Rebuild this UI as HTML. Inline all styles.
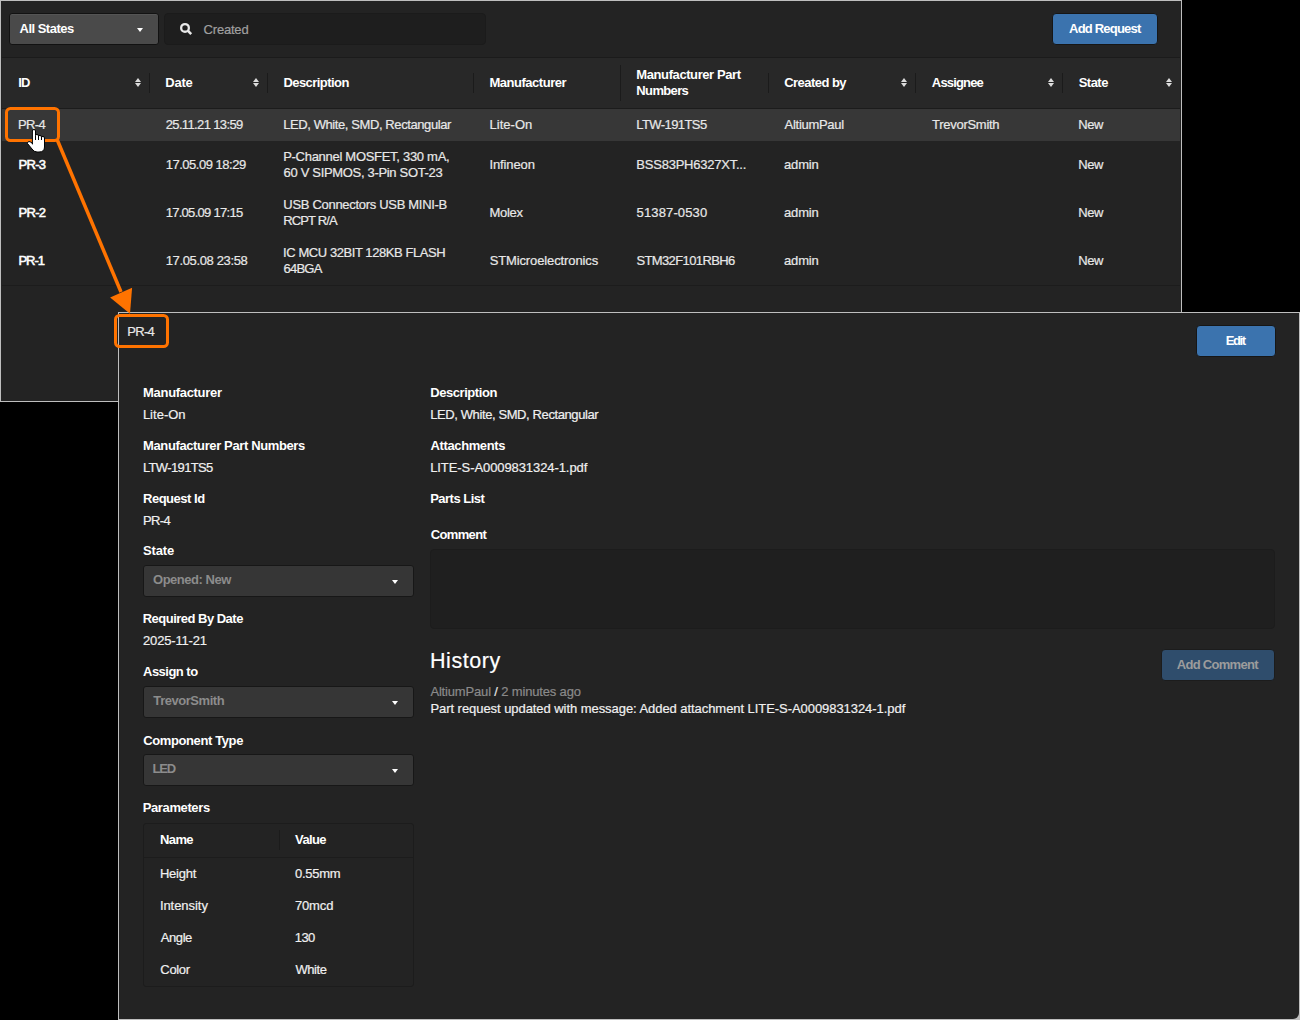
<!DOCTYPE html>
<html><head><meta charset="utf-8">
<style>
*{box-sizing:border-box}
html,body{margin:0;padding:0}
body{width:1300px;height:1020px;background:#000;position:relative;overflow:hidden;font-family:"Liberation Sans",sans-serif}
.a{position:absolute}
.t{position:absolute;white-space:nowrap;line-height:1;font-family:"Liberation Sans",sans-serif}
.r{-webkit-text-stroke:0.2px currentColor}
.sb{-webkit-text-stroke:0.55px currentColor}
.btn{position:absolute;background:#3b73ae;border:1px solid #161616;border-radius:4px}
.sel{position:absolute;background:#363636;border:1px solid #171717;border-radius:3px}
.div{position:absolute;width:1px;background:#1b1b1b}
</style></head><body>
<!-- top panel -->
<div class="a" style="left:0;top:0;width:1182px;height:402px;background:#bebebe"></div>
<div class="a" style="left:1px;top:1px;width:1180px;height:400px;background:#232323"></div>
<!-- toolbar -->
<div class="a" style="left:9px;top:13px;width:150px;height:32px;background:#4a4a4a;border:1px solid #121212;border-radius:3px;box-shadow:inset 0 1px 0 #545454"></div>
<svg class="a" style="left:0;top:0" width="1300" height="60">
 <polygon points="137,28 143,28 140,32" fill="#ffffff"/>
</svg>
<div class="a" style="left:164px;top:13px;width:322px;height:32px;background:#1e1e1e;border:1px solid #1b1b1b;border-radius:4px"></div>
<svg class="a" style="left:0;top:0" width="220" height="50">
 <circle cx="185" cy="27.9" r="3.85" fill="none" stroke="#e8e8e8" stroke-width="2.3"/>
 <line x1="187.8" y1="30.7" x2="191.2" y2="34.1" stroke="#e8e8e8" stroke-width="2.6" stroke-linecap="butt"/>
</svg>
<div class="btn" style="left:1052px;top:13px;width:106px;height:32px"></div>
<!-- table -->
<div class="a" style="left:2px;top:57px;width:1178px;height:1px;background:#1b1b1b"></div>
<div class="a" style="left:2px;top:58px;width:1178px;height:50px;background:#282828"></div>
<div class="a" style="left:2px;top:108px;width:1178px;height:1px;background:#1c1c1c"></div>
<div class="a" style="left:2px;top:109px;width:1178px;height:32px;background:#373737"></div>
<div class="a" style="left:2px;top:285px;width:1178px;height:1px;background:#1c1c1c"></div>
<div class="div" style="left:149px;top:73px;height:20px"></div>
<div class="div" style="left:267px;top:73px;height:20px"></div>
<div class="div" style="left:473px;top:73px;height:20px"></div>
<div class="div" style="left:620px;top:65px;height:36px"></div>
<div class="div" style="left:768px;top:73px;height:20px"></div>
<div class="div" style="left:915px;top:73px;height:20px"></div>
<div class="div" style="left:1062px;top:73px;height:20px"></div>
<svg class="a" style="left:0;top:70px" width="1300" height="24">
 <g fill="#dcdcdc">
  <polygon points="135,12 141,12 138,8"/><polygon points="135,13 141,13 138,17"/>
  <polygon points="253,12 259,12 256,8"/><polygon points="253,13 259,13 256,17"/>
  <polygon points="901,12 907,12 904,8"/><polygon points="901,13 907,13 904,17"/>
  <polygon points="1048,12 1054,12 1051,8"/><polygon points="1048,13 1054,13 1051,17"/>
  <polygon points="1166,12 1172,12 1169,8"/><polygon points="1166,13 1172,13 1169,17"/>
 </g>
</svg>
<!-- detail panel -->
<div class="a" style="left:118px;top:312px;width:1182px;height:708px;background:#bebebe"></div>
<div class="a" style="left:119px;top:313px;width:1180px;height:706px;background:#232323;border-bottom-right-radius:6px"></div>
<div class="btn" style="left:1196px;top:325px;width:80px;height:32px"></div>
<div class="sel" style="left:143px;top:565px;width:271px;height:32px"></div>
<div class="sel" style="left:143px;top:686px;width:271px;height:32px"></div>
<div class="sel" style="left:143px;top:754px;width:271px;height:32px"></div>
<svg class="a" style="left:0;top:0" width="1300" height="1020">
 <polygon points="392,580 398,580 395,584" fill="#ffffff"/>
 <polygon points="392,701 398,701 395,705" fill="#ffffff"/>
 <polygon points="392,769 398,769 395,773" fill="#ffffff"/>
</svg>
<div class="a" style="left:430px;top:549px;width:845px;height:80px;background:#1f1f1f;border:1px solid #1c1c1c;border-radius:4px"></div>
<div class="a" style="left:1161px;top:649px;width:114px;height:32px;background:#2f4d6c;border:1px solid #1c1c1c;border-radius:4px"></div>
<div class="a" style="left:143px;top:823px;width:271px;height:164px;background:#232323;border:1px solid #1c1c1c;border-radius:3px"></div>
<div class="a" style="left:144px;top:857px;width:269px;height:1px;background:#1c1c1c"></div>
<div class="div" style="left:279px;top:830px;height:20px"></div>
<div class="t" style="left:19.58px;top:21.70px;font-size:13px;font-weight:700;color:#ffffff;letter-spacing:-0.520px">All States</div>
<div class="t r" style="left:203.62px;top:23.10px;font-size:13px;font-weight:400;color:#a0a0a0;letter-spacing:-0.206px">Created</div>
<div class="t" style="left:1069.05px;top:21.80px;font-size:13px;font-weight:700;color:#ffffff;letter-spacing:-0.797px">Add Request</div>
<div class="t" style="left:18.20px;top:76.00px;font-size:13px;font-weight:700;color:#ffffff;letter-spacing:-0.709px">ID</div>
<div class="t" style="left:165.36px;top:76.00px;font-size:13px;font-weight:700;color:#ffffff;letter-spacing:-0.277px">Date</div>
<div class="t" style="left:283.38px;top:75.90px;font-size:13px;font-weight:700;color:#ffffff;letter-spacing:-0.554px">Description</div>
<div class="t" style="left:489.50px;top:76.10px;font-size:13px;font-weight:700;color:#ffffff;letter-spacing:-0.483px">Manufacturer</div>
<div class="t" style="left:636.36px;top:68.10px;font-size:13px;font-weight:700;color:#ffffff;letter-spacing:-0.413px">Manufacturer Part</div>
<div class="t" style="left:636.36px;top:83.70px;font-size:13px;font-weight:700;color:#ffffff;letter-spacing:-0.645px">Numbers</div>
<div class="t" style="left:784.19px;top:76.00px;font-size:13px;font-weight:700;color:#ffffff;letter-spacing:-0.533px">Created by</div>
<div class="t" style="left:931.84px;top:76.00px;font-size:13px;font-weight:700;color:#ffffff;letter-spacing:-0.825px">Assignee</div>
<div class="t" style="left:1078.73px;top:76.00px;font-size:13px;font-weight:700;color:#ffffff;letter-spacing:-0.528px">State</div>
<div class="t r" style="left:18.10px;top:117.80px;font-size:13px;font-weight:400;color:#e8e8e8;letter-spacing:-0.644px">PR-4</div>
<div class="t r" style="left:165.71px;top:117.80px;font-size:13px;font-weight:400;color:#e8e8e8;letter-spacing:-0.637px">25.11.21 13:59</div>
<div class="t r" style="left:283.19px;top:117.80px;font-size:13px;font-weight:400;color:#e8e8e8;letter-spacing:-0.406px">LED, White, SMD, Rectangular</div>
<div class="t r" style="left:489.51px;top:117.80px;font-size:13px;font-weight:400;color:#e8e8e8;letter-spacing:0.037px">Lite-On</div>
<div class="t r" style="left:636.31px;top:117.80px;font-size:13px;font-weight:400;color:#e8e8e8;letter-spacing:-0.588px">LTW-191TS5</div>
<div class="t r" style="left:784.61px;top:117.80px;font-size:13px;font-weight:400;color:#e8e8e8;letter-spacing:-0.294px">AltiumPaul</div>
<div class="t r" style="left:932.01px;top:117.80px;font-size:13px;font-weight:400;color:#e8e8e8;letter-spacing:-0.274px">TrevorSmith</div>
<div class="t r" style="left:1078.19px;top:117.80px;font-size:13px;font-weight:400;color:#e8e8e8;letter-spacing:-0.341px">New</div>
<div class="t sb" style="left:18.48px;top:158.20px;font-size:13px;font-weight:400;color:#ffffff;letter-spacing:-0.670px">PR-3</div>
<div class="t r" style="left:165.65px;top:158.20px;font-size:13px;font-weight:400;color:#e8e8e8;letter-spacing:-0.482px">17.05.09 18:29</div>
<div class="t r" style="left:283.21px;top:149.80px;font-size:13px;font-weight:400;color:#e8e8e8;letter-spacing:-0.290px">P-Channel MOSFET, 330 mA,</div>
<div class="t r" style="left:283.61px;top:166.00px;font-size:13px;font-weight:400;color:#e8e8e8;letter-spacing:-0.324px">60 V SIPMOS, 3-Pin SOT-23</div>
<div class="t r" style="left:489.46px;top:158.20px;font-size:13px;font-weight:400;color:#e8e8e8;letter-spacing:-0.106px">Infineon</div>
<div class="t r" style="left:636.34px;top:158.20px;font-size:13px;font-weight:400;color:#e8e8e8;letter-spacing:-0.235px">BSS83PH6327XT...</div>
<div class="t r" style="left:784.02px;top:158.20px;font-size:13px;font-weight:400;color:#e8e8e8;letter-spacing:-0.171px">admin</div>
<div class="t r" style="left:1078.21px;top:158.20px;font-size:13px;font-weight:400;color:#e8e8e8;letter-spacing:-0.372px">New</div>
<div class="t sb" style="left:18.48px;top:206.00px;font-size:13px;font-weight:400;color:#ffffff;letter-spacing:-0.677px">PR-2</div>
<div class="t r" style="left:165.65px;top:206.00px;font-size:13px;font-weight:400;color:#e8e8e8;letter-spacing:-0.709px">17.05.09 17:15</div>
<div class="t r" style="left:283.37px;top:197.60px;font-size:13px;font-weight:400;color:#e8e8e8;letter-spacing:-0.306px">USB Connectors USB MINI-B</div>
<div class="t r" style="left:283.21px;top:213.60px;font-size:13px;font-weight:400;color:#e8e8e8;letter-spacing:-0.851px">RCPT R/A</div>
<div class="t r" style="left:489.53px;top:206.00px;font-size:13px;font-weight:400;color:#e8e8e8;letter-spacing:-0.321px">Molex</div>
<div class="t r" style="left:636.58px;top:206.00px;font-size:13px;font-weight:400;color:#e8e8e8;letter-spacing:0.133px">51387-0530</div>
<div class="t r" style="left:784.02px;top:206.00px;font-size:13px;font-weight:400;color:#e8e8e8;letter-spacing:-0.171px">admin</div>
<div class="t r" style="left:1078.21px;top:206.00px;font-size:13px;font-weight:400;color:#e8e8e8;letter-spacing:-0.372px">New</div>
<div class="t sb" style="left:18.48px;top:254.00px;font-size:13px;font-weight:400;color:#ffffff;letter-spacing:-1.019px">PR-1</div>
<div class="t r" style="left:165.65px;top:254.00px;font-size:13px;font-weight:400;color:#e8e8e8;letter-spacing:-0.352px">17.05.08 23:58</div>
<div class="t r" style="left:283.11px;top:245.60px;font-size:13px;font-weight:400;color:#e8e8e8;letter-spacing:-0.434px">IC MCU 32BIT 128KB FLASH</div>
<div class="t r" style="left:283.61px;top:261.60px;font-size:13px;font-weight:400;color:#e8e8e8;letter-spacing:-0.791px">64BGA</div>
<div class="t r" style="left:489.63px;top:254.00px;font-size:13px;font-weight:400;color:#e8e8e8;letter-spacing:-0.117px">STMicroelectronics</div>
<div class="t r" style="left:636.42px;top:254.00px;font-size:13px;font-weight:400;color:#e8e8e8;letter-spacing:-0.614px">STM32F101RBH6</div>
<div class="t r" style="left:784.02px;top:254.00px;font-size:13px;font-weight:400;color:#e8e8e8;letter-spacing:-0.171px">admin</div>
<div class="t r" style="left:1078.21px;top:254.00px;font-size:13px;font-weight:400;color:#e8e8e8;letter-spacing:-0.372px">New</div>
<div class="t r" style="left:127.21px;top:325.00px;font-size:13px;font-weight:400;color:#e8e8e8;letter-spacing:-0.674px">PR-4</div>
<div class="t" style="left:1225.81px;top:334.00px;font-size:13px;font-weight:700;color:#ffffff;letter-spacing:-1.455px">Edit</div>
<div class="t" style="left:143.12px;top:386.20px;font-size:13px;font-weight:700;color:#ffffff;letter-spacing:-0.320px">Manufacturer</div>
<div class="t r" style="left:142.89px;top:408.00px;font-size:13px;font-weight:400;color:#f0f0f0;letter-spacing:0.015px">Lite-On</div>
<div class="t" style="left:143.01px;top:438.90px;font-size:13px;font-weight:700;color:#ffffff;letter-spacing:-0.373px">Manufacturer Part Numbers</div>
<div class="t r" style="left:142.89px;top:460.90px;font-size:13px;font-weight:400;color:#f0f0f0;letter-spacing:-0.625px">LTW-191TS5</div>
<div class="t" style="left:143.01px;top:491.80px;font-size:13px;font-weight:700;color:#ffffff;letter-spacing:-0.486px">Request Id</div>
<div class="t r" style="left:142.89px;top:513.90px;font-size:13px;font-weight:400;color:#f0f0f0;letter-spacing:-0.566px">PR-4</div>
<div class="t" style="left:143.08px;top:544.40px;font-size:13px;font-weight:700;color:#ffffff;letter-spacing:-0.178px">State</div>
<div class="t" style="left:153.04px;top:573.20px;font-size:13px;font-weight:700;color:#8c8c8c;letter-spacing:-0.485px">Opened: New</div>
<div class="t" style="left:142.74px;top:612.30px;font-size:13px;font-weight:700;color:#ffffff;letter-spacing:-0.514px">Required By Date</div>
<div class="t r" style="left:143.03px;top:633.90px;font-size:13px;font-weight:400;color:#f0f0f0;letter-spacing:-0.166px">2025-11-21</div>
<div class="t" style="left:143.05px;top:664.80px;font-size:13px;font-weight:700;color:#ffffff;letter-spacing:-0.521px">Assign to</div>
<div class="t" style="left:153.36px;top:694.10px;font-size:13px;font-weight:700;color:#8c8c8c;letter-spacing:-0.457px">TrevorSmith</div>
<div class="t" style="left:143.21px;top:733.60px;font-size:13px;font-weight:700;color:#ffffff;letter-spacing:-0.386px">Component Type</div>
<div class="t" style="left:152.60px;top:762.00px;font-size:13px;font-weight:700;color:#8c8c8c;letter-spacing:-1.277px">LED</div>
<div class="t" style="left:142.74px;top:801.10px;font-size:13px;font-weight:700;color:#ffffff;letter-spacing:-0.383px">Parameters</div>
<div class="t" style="left:160.01px;top:833.10px;font-size:13px;font-weight:700;color:#ffffff;letter-spacing:-0.605px">Name</div>
<div class="t" style="left:295.11px;top:833.10px;font-size:13px;font-weight:700;color:#ffffff;letter-spacing:-0.671px">Value</div>
<div class="t r" style="left:159.89px;top:867.00px;font-size:13px;font-weight:400;color:#f0f0f0;letter-spacing:-0.200px">Height</div>
<div class="t r" style="left:295.07px;top:867.00px;font-size:13px;font-weight:400;color:#f0f0f0;letter-spacing:-0.278px">0.55mm</div>
<div class="t r" style="left:159.89px;top:898.90px;font-size:13px;font-weight:400;color:#f0f0f0;letter-spacing:-0.051px">Intensity</div>
<div class="t r" style="left:294.91px;top:898.90px;font-size:13px;font-weight:400;color:#f0f0f0;letter-spacing:-0.130px">70mcd</div>
<div class="t r" style="left:160.85px;top:931.00px;font-size:13px;font-weight:400;color:#f0f0f0;letter-spacing:-0.443px">Angle</div>
<div class="t r" style="left:294.73px;top:931.00px;font-size:13px;font-weight:400;color:#f0f0f0;letter-spacing:-0.567px">130</div>
<div class="t r" style="left:160.35px;top:963.00px;font-size:13px;font-weight:400;color:#f0f0f0;letter-spacing:-0.342px">Color</div>
<div class="t r" style="left:295.44px;top:963.00px;font-size:13px;font-weight:400;color:#f0f0f0;letter-spacing:-0.438px">White</div>
<div class="t" style="left:430.20px;top:386.10px;font-size:13px;font-weight:700;color:#ffffff;letter-spacing:-0.436px">Description</div>
<div class="t r" style="left:430.20px;top:408.00px;font-size:13px;font-weight:400;color:#f0f0f0;letter-spacing:-0.395px">LED, White, SMD, Rectangular</div>
<div class="t" style="left:430.57px;top:439.00px;font-size:13px;font-weight:700;color:#ffffff;letter-spacing:-0.386px">Attachments</div>
<div class="t r" style="left:430.20px;top:461.00px;font-size:13px;font-weight:400;color:#f0f0f0;letter-spacing:-0.082px">LITE-S-A0009831324-1.pdf</div>
<div class="t" style="left:430.20px;top:492.10px;font-size:13px;font-weight:700;color:#ffffff;letter-spacing:-0.515px">Parts List</div>
<div class="t" style="left:430.71px;top:528.30px;font-size:13px;font-weight:700;color:#ffffff;letter-spacing:-0.640px">Comment</div>
<div class="t r" style="left:429.95px;top:651.10px;font-size:21.5px;font-weight:400;color:#ffffff;letter-spacing:0.589px">History</div>
<div class="t r" style="left:430.46px;top:701.50px;font-size:13px;font-weight:400;color:#f0f0f0;letter-spacing:-0.058px">Part request updated with message: Added attachment LITE-S-A0009831324-1.pdf</div>
<div class="t" style="left:1176.80px;top:658.20px;font-size:13px;font-weight:700;color:#9c9c9c;letter-spacing:-0.714px">Add Comment</div>
<div class="t r" style="left:430.40px;top:684.90px;font-size:13px;color:#8a8a8a;letter-spacing:-0.164px">AltiumPaul<span style="color:#e6e6e6"> / </span>2 minutes ago</div>
<!-- annotations -->
<svg class="a" style="left:0;top:0" width="1300" height="1020">
 <rect x="6.5" y="108.5" width="52" height="32" rx="4" ry="4" fill="none" stroke="#ff7300" stroke-width="3"/>
 <line x1="57.5" y1="140.5" x2="121" y2="292" stroke="#ff7300" stroke-width="3.5"/>
 <polygon points="110.1,297.5 132.1,287.8 130,313.8" fill="#ff7300"/>
 <rect x="115.5" y="315.5" width="52" height="31" rx="4" ry="4" fill="none" stroke="#ff7300" stroke-width="3"/>
 <g transform="translate(24,124)">
  <path d="M8.4,20 L8.4,7 Q8.4,5.5 9.95,5.5 Q11.5,5.5 11.5,7 L11.5,11.5 Q11.5,10.5 13,10.5 Q14.5,10.5 14.5,12 Q14.5,11.5 16,11.5 Q17.5,11.5 17.5,13 Q17.5,12.5 19,12.5 Q20.5,12.5 20.5,14 L20.5,23 Q20.5,28 15,28 L13,28 Q10,28 8,25 L3.5,19.5 Q3,18 5,17.5 Q6.5,17.5 9,20 Z" fill="#ffffff" stroke="#000" stroke-width="1"/>
  <path d="M11.5,11.5 L11.5,16 M14.5,12 L14.5,16 M17.5,13 L17.5,16" stroke="#000" stroke-width="1"/>
 </g>
</svg>
</body></html>
